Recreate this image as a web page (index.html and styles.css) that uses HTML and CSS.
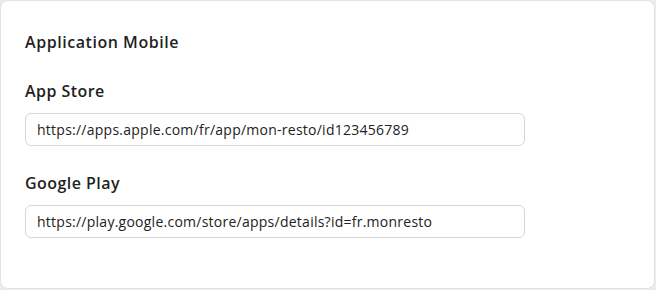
FILE: index.html
```html
<!DOCTYPE html>
<html lang="fr">
<head>
<meta charset="utf-8">
<link rel="stylesheet" href="styles.css">
</head>
<body>
<section class="card">
  <h2 class="title">Application Mobile</h2>
  <div class="field">
    <label class="label">App Store</label>
    <div class="input">https://apps.apple.com/fr/app/mon-resto/id123456789</div>
  </div>
  <div class="field">
    <label class="label">Google Play</label>
    <div class="input">https://play.google.com/store/apps/details?id=fr.monresto</div>
  </div>
</section>
</body>
</html>
```
FILE: styles.css
```css
html, body { margin: 0; padding: 0; background: #ececec; }
body { width: 656px; height: 290px; font-family: "Open Sans", sans-serif; color: #1f1f1f; }
.card {
  box-sizing: border-box;
  width: 655px;
  height: 289px;
  background: #fff;
  border: 1px solid #e2e2e2;
  border-radius: 8px;
  padding: 31px 24px 0 24px;
}
.title { margin: 0 0 29px; font-size: 16px; font-weight: 600; line-height: 20px; letter-spacing: 0.55px; }
.field { margin-bottom: 27px; }
.label { display: block; font-size: 16px; font-weight: 600; line-height: 20px; margin-bottom: 12px; letter-spacing: 0.45px; }
.input {
  box-sizing: border-box;
  width: 500px;
  height: 33px;
  border: 1px solid #d6d6d6;
  border-radius: 6px;
  padding: 0 11px;
  font-size: 14px;
  letter-spacing: 0.25px;
  line-height: 31px;
  color: #222;
}
```
